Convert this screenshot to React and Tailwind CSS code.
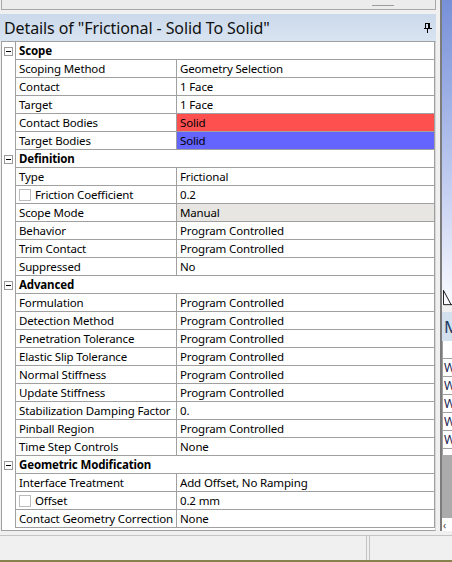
import React from "react";

const sections = [
  {
    title: "Scope",
    rows: [
      ["Scoping Method", "Geometry Selection"],
      ["Contact", "1 Face"],
      ["Target", "1 Face"],
      ["Contact Bodies", "Solid", "red"],
      ["Target Bodies", "Solid", "blue"],
    ],
  },
  {
    title: "Definition",
    rows: [
      ["Type", "Frictional"],
      ["Friction Coefficient", "0.2", "check"],
      ["Scope Mode", "Manual", "grey"],
      ["Behavior", "Program Controlled"],
      ["Trim Contact", "Program Controlled"],
      ["Suppressed", "No"],
    ],
  },
  {
    title: "Advanced",
    rows: [
      ["Formulation", "Program Controlled"],
      ["Detection Method", "Program Controlled"],
      ["Penetration Tolerance", "Program Controlled"],
      ["Elastic Slip Tolerance", "Program Controlled"],
      ["Normal Stiffness", "Program Controlled"],
      ["Update Stiffness", "Program Controlled"],
      ["Stabilization Damping Factor", "0."],
      ["Pinball Region", "Program Controlled"],
      ["Time Step Controls", "None"],
    ],
  },
  {
    title: "Geometric Modification",
    rows: [
      ["Interface Treatment", "Add Offset, No Ramping"],
      ["Offset", "0.2 mm", "check"],
      ["Contact Geometry Correction", "None"],
    ],
  },
];

const valueBg = {
  red: "bg-[#ff5050]",
  blue: "bg-[#6464ff]",
  grey: "bg-[#e8e6e2]",
};

const PinIcon = () => (
  <svg width="8" height="10" viewBox="0 0 8 10" shapeRendering="crispEdges" fill="#000">
    <rect x="1" y="0" width="5" height="1" />
    <rect x="1" y="0" width="1" height="5" />
    <rect x="4" y="0" width="2" height="5" />
    <rect x="0" y="5" width="8" height="1" />
    <rect x="3" y="6" width="1" height="4" />
  </svg>
);

const Minus = () => (
  <div className="w-[9px] h-[9px] border border-[#9a9a9a] bg-white flex items-center justify-center">
    <div className="w-[5px] h-[1px] bg-black" />
  </div>
);

const SectionRow = ({ title }) => (
  <div className="flex h-[18px]">
    <div className="w-[13px] flex items-center justify-center">
      <Minus />
    </div>
    <div className="flex-1 border-l border-r border-b border-[#a0a0a0] pl-[3px] flex items-center font-bold">
      {title}
    </div>
  </div>
);

const PropRow = ({ label, value, kind }) => (
  <div className="flex h-[18px]">
    <div className="w-[13px]" />
    <div className="flex-1 flex border-l border-r border-b border-[#a0a0a0]">
      <div className="w-[161px] shrink-0 border-r border-[#a0a0a0] pl-[3px] flex items-center whitespace-nowrap overflow-hidden">
        {kind === "check" && (
          <div className="w-[12px] h-[12px] border border-[#bcbcbc] bg-white mr-[4px] shrink-0" />
        )}
        {label}
      </div>
      <div className={`flex-1 pl-[3px] flex items-center whitespace-nowrap ${valueBg[kind] || ""}`}>
        {value}
      </div>
    </div>
  </div>
);

const Details = () => (
  <div className="w-[436px] flex flex-col pl-[1px]">
    <div className="h-[14px]">
      <div className="h-[10px] border-l border-r border-b border-[#a8a8a8] bg-[#ececec] flex">
        <div className="ml-[370px] mt-[5px] w-[22px] h-[2px] border-t border-[#9c9c9c]" />
      </div>
    </div>
    <div className="h-[27px] -ml-[1px] bg-gradient-to-b from-[#cad9eb] to-[#d9e4f1] flex items-center justify-between pl-[4px] pr-[4px]">
      <span className="text-[16px] text-[#101010] leading-none tracking-[-0.1px]">
        Details of "Frictional - Solid To Solid"
      </span>
      <PinIcon />
    </div>
    <div className="h-[490px] bg-white border border-[#a0a0a0] border-r-[#d6d6d6] text-[11.5px] tracking-[-0.15px] text-black">
      {sections.map((s) => (
        <React.Fragment key={s.title}>
          <SectionRow title={s.title} />
          {s.rows.map(([l, v, k]) => (
            <PropRow key={l} label={l} value={v} kind={k} />
          ))}
        </React.Fragment>
      ))}
    </div>
  </div>
);

const Viewport = () => (
  <div className="flex-1 flex flex-col overflow-hidden">
    <div className="h-[306px] bg-gradient-to-b from-[#7790d7] via-[#b4c2ec] to-[#fbfbff] flex items-end">
      <svg width="10" height="17" viewBox="0 0 10 17" className="ml-[1px]">
        <path d="M0.5 0.5 V16.5 H10 M0.5 0.5 L9 16.5" stroke="#000" strokeWidth="1" fill="none" />
      </svg>
    </div>
    <div className="h-[6px] bg-[#f0f0f0]" />
    <div className="h-[29px] bg-[#d3e0ee] flex items-center pl-[2px] text-[17px] text-[#1e3c64] leading-none">
      M
    </div>
    <div className="h-[114px] bg-white border-l border-[#a0a0a0] text-[12px] text-[#1c2450]">
      <div className="h-[18px] border-b border-[#a0a0a0]" />
      {[0, 1, 2, 3, 4].map((i) => (
        <div key={i} className="h-[18px] border-b border-[#a0a0a0] pl-[1px] flex items-center">
          W
        </div>
      ))}
    </div>
    <div className="h-[63px] bg-[#ababab]" />
    <div className="h-[13px] bg-white flex items-center pl-[1px] text-[10px] text-[#404040] leading-none">
      ‹
    </div>
  </div>
);

const StatusBar = () => (
  <div className="h-[31px] flex flex-col bg-[#f0f0f0]">
    <div className="h-[4px]" />
    <div className="h-[25px] flex border-t border-[#c4c4c4]">
      <div className="w-[367px] border-r border-[#c4c4c4]" />
      <div className="w-[2px]" />
      <div className="flex-1 border-l border-[#c4c4c4]" />
    </div>
    <div className="h-[2px] bg-[#87814c]" />
  </div>
);

export default function App() {
  return (
    <div className="w-[452px] h-[562px] overflow-hidden bg-[#f0f0f0] flex flex-col font-['Noto_Sans','Open_Sans','Liberation_Sans',sans-serif]">
      <div className="h-[531px] flex">
        <Details />
        <div className="w-[4px]" />
        <div className="w-[2px] bg-[#7c7c7c]" />
        <Viewport />
      </div>
      <StatusBar />
    </div>
  );
}
